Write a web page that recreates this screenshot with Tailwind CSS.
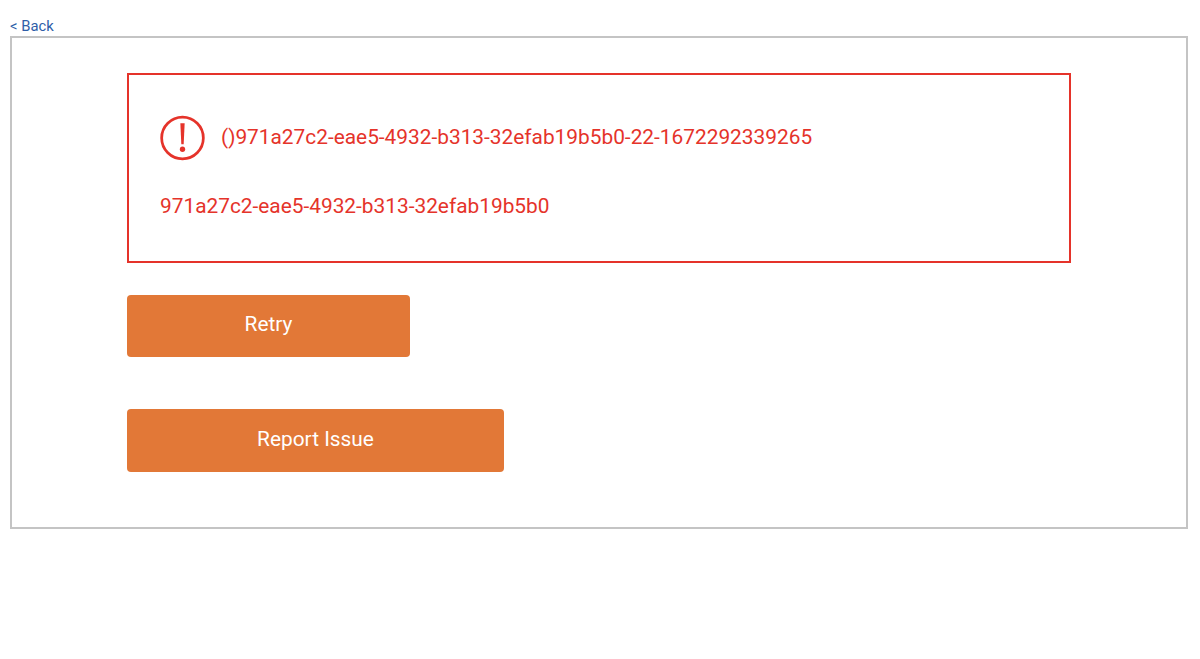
<!DOCTYPE html>
<html>
<head>
<meta charset="utf-8">
<script src="https://cdn.jsdelivr.net/npm/@tailwindcss/browser@4"></script>
</head>
<body class="bg-white font-['Roboto',sans-serif]">
<div class="h-[659px] pt-[17px] pl-[10px] pr-[12px]">
  <a class="block h-[19px] text-[14.8px] leading-[18px] text-[#2f5ea8]">&lt; Back</a>
  <div class="border-2 border-[#c4c4c4] h-[493px] pt-[35px] pl-[115px]">
    <div class="w-[944px] h-[190px] border-2 border-[#e5332a] pt-[40px] pl-[31px] text-[#e5332a] text-[20.85px] leading-[24px]">
      <div class="flex items-center gap-[16px] h-[46px]">
        <svg class="w-[45px] h-[46px] shrink-0" viewBox="0 0 46 46" fill="none">
          <circle cx="23" cy="23" r="21.3" stroke="#e5332a" stroke-width="2.8"/>
          <path d="M20.8 8h4.4l-1 21.5h-2.4z" fill="#e5332a"/>
          <circle cx="23" cy="34.5" r="2.7" fill="#e5332a"/>
        </svg>
        <span class="relative top-[-1px]">()971a27c2-eae5-4932-b313-32efab19b5b0-22-1672292339265</span>
      </div>
      <div class="mt-[33px]">971a27c2-eae5-4932-b313-32efab19b5b0</div>
    </div>
    <button class="block mt-[32px] w-[283px] h-[62px] pb-[2px] bg-[#e27837] rounded-[4px] text-white text-[20.85px]">Retry</button>
    <button class="block mt-[52px] w-[377px] h-[62.5px] pb-[1px] bg-[#e27837] rounded-[4px] text-white text-[20.85px]">Report Issue</button>
  </div>
</div>
</body>
</html>
